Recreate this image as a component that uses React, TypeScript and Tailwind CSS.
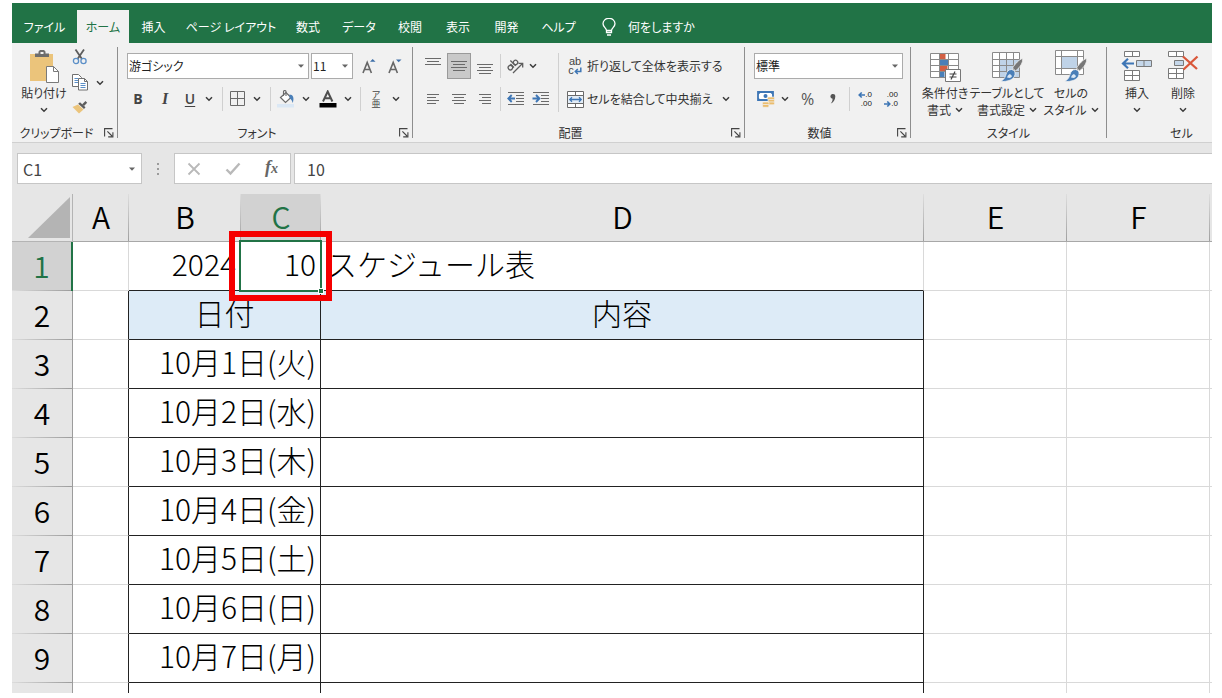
import type { ReactNode } from "react";

/* ---------- small parts ---------- */

function Chevron() {
  return (
    <svg width="8" height="6" viewBox="0 0 8 6" fill="none" stroke="#3b3b3b" strokeWidth="1.5" aria-hidden="true">
      <path d="M1 1.2 4 4.2 7 1.2" />
    </svg>
  );
}

function Triangle({ className = "" }: { className?: string }) {
  return (
    <svg className={className} width="6" height="4" viewBox="0 0 6 4" fill="#666" aria-hidden="true">
      <path d="M0 0.4h6L3 3.8z" />
    </svg>
  );
}

function Tool({ label, width, children, className = "" }: { label: string; width: string; children: ReactNode; className?: string }) {
  return (
    <button type="button" aria-label={label} className={`flex h-[26px] shrink-0 items-center justify-center ${width} ${className}`}>
      {children}
    </button>
  );
}

function Divider({ width, height = "h-6" }: { width: string; height?: string }) {
  return (
    <div className={`flex shrink-0 items-center justify-center ${width}`}>
      <div className={`w-px bg-[#d0d0d0] ${height}`} />
    </div>
  );
}

function Group({ label, width, launcher = true, last = false, children }: { label: string; width: string; launcher?: boolean; last?: boolean; children: ReactNode }) {
  return (
    <section aria-label={label} className={`flex shrink-0 ${width}`}>
      <div className="flex min-w-0 flex-1 flex-col justify-between">
        {children}
        <div className="flex h-[18px] items-center">
          <span className="flex-1 text-center leading-4">{label}</span>
          {launcher && (
            <button type="button" aria-label={`${label}の設定`} className="flex w-4 shrink-0 justify-center">
              <svg width="10" height="10" viewBox="0 0 10 10" fill="none" stroke="#444" strokeWidth="1.1">
                <path d="M0.6 8.5V0.6H8.5M3.4 3.4 8 8M8.9 4.2V8.9H4.2" />
              </svg>
            </button>
          )}
        </div>
      </div>
      {!last && <div className="mb-1 w-px bg-[#8e8e8e]" />}
    </section>
  );
}

function Lines({ rows }: { rows: [number, number, number][] }) {
  return (
    <svg width="16" height="22" viewBox="0 0 16 22" stroke="#6a6a6a" strokeWidth="1" aria-hidden="true">
      {rows.map(([x1, x2, y]) => (
        <path key={y} d={`M${x1} ${y}.5H${x2}`} />
      ))}
    </svg>
  );
}

/* ---------- icons ---------- */

function PasteIcon() {
  return (
    <svg width="32" height="34" viewBox="0 0 32 34" aria-hidden="true">
      <path d="M2 4h23v27H2z" fill="#ebc47b" />
      <path d="M7 7V3.5h3.500V1.500L12 0h4l1.500 1.500v2H21V7z" fill="#6d6d6d" />
      <rect x="12.500" y="2" width="3" height="2" fill="#f1f1f1" />
      <path d="M18.500 16.500h7l5 5v11h-12z" fill="#fff" stroke="#7a7a7a" />
      <path d="M25.500 16.500v5h5" fill="none" stroke="#7a7a7a" />
    </svg>
  );
}

function CutIcon() {
  return (
    <svg width="16" height="16" viewBox="0 0 16 16" fill="none" aria-hidden="true">
      <path d="M3.500 0.500 10 10M12 0.500 5.500 10" stroke="#5d5d5d" strokeWidth="1.800" />
      <circle cx="4" cy="12" r="2.600" stroke="#5b8fc7" strokeWidth="1.300" />
      <circle cx="11.500" cy="12" r="2.600" stroke="#5b8fc7" strokeWidth="1.300" />
    </svg>
  );
}

function CopyIcon() {
  return (
    <svg width="16" height="17" viewBox="0 0 16 17" fill="#fff" stroke="#707070" aria-hidden="true">
      <path d="M0.500 0.500h6l3 3v9h-9z" />
      <path d="M2.500 4.500h4M2.500 6.500h4M2.500 8.500h4" stroke="#5b8fc7" />
      <path d="M6.500 4.500h6l3 3v8.500h-9z" />
      <path d="M12.500 4.500v3h3" fill="none" />
      <path d="M8.500 9.500h5M8.500 11.500h5M8.500 13.500h5" stroke="#5b8fc7" />
    </svg>
  );
}

function BrushIcon() {
  return (
    <svg width="16" height="14" viewBox="0 0 16 14" aria-hidden="true">
      <path d="M0.500 7 6 4.500l5.500 5L7 13.500z" fill="#ebc47b" />
      <path d="M6.200 3.800 8 2.200l5.500 5-1.500 1.800z" fill="#5d5d5d" />
      <path d="m10 4.500 3.500-3.500 1.700 1.700L12 6z" fill="#5d5d5d" />
    </svg>
  );
}

function GrowFont({ down = false }: { down?: boolean }) {
  return (
    <svg width="14" height="17" viewBox="0 0 14 17" aria-hidden="true">
      <path d="M1 15 5.200 4.500 9.400 15M2.600 11.500h5.300" fill="none" stroke="#666" strokeWidth="1.600" />
      <path d={down ? "M8 1.500h5.500L10.700 4.300z" : "M8 3.800h5.500L10.700 1z"} fill="#3e6fa8" />
    </svg>
  );
}

function BordersIcon() {
  return (
    <svg width="16" height="16" viewBox="0 0 16 16" fill="none" stroke="#6a6a6a" aria-hidden="true">
      <path d="M0.500 0.500h14v14h-14zM7.500 0.500v14M0.500 7.500h14" />
    </svg>
  );
}

function BucketIcon() {
  return (
    <svg width="18" height="18" viewBox="0 0 18 18" aria-hidden="true">
      <path d="M0 14h17v3.500H0z" fill="#dbe8f5" />
      <path d="M3.500 7.500 9 2.500l5 5-5.500 5z" fill="#fff" stroke="#6a6a6a" strokeWidth="1.200" />
      <path d="M6.500 6V1.500c0-1.300 2.500-1.300 2.500 0V6" fill="none" stroke="#6a6a6a" strokeWidth="1.100" />
      <path d="M12.500 4.500c3.500 0 5 3 3.300 8.500-.8-2-1.300-3.500-3.300-5z" fill="#4a7fb8" />
    </svg>
  );
}

function FontColorIcon() {
  return (
    <svg width="18" height="18" viewBox="0 0 18 18" aria-hidden="true">
      <path d="M4 11.500 8.700 1.500 13.400 11.500M5.800 8.200h5.800" fill="none" stroke="#4f4f4f" strokeWidth="2" />
      <path d="M0.500 13h17v4.500H0.500z" fill="#000" />
    </svg>
  );
}

function OrientationIcon() {
  return (
    <svg width="18" height="18" viewBox="0 0 18 18" fill="none" stroke="#5d5d5d" strokeWidth="1.300" aria-hidden="true">
      <g transform="rotate(-45 6 8)">
        <circle cx="2.300" cy="8" r="2.200" />
        <path d="M4.900 5.500v5M7.300 3v7.500" />
        <circle cx="9.600" cy="8" r="2.200" />
      </g>
      <path d="M6 16 15.500 6.500M11.500 6.300h4.200v4.200" />
    </svg>
  );
}

function IndentIcon({ right = false }: { right?: boolean }) {
  return (
    <svg width="18" height="16" viewBox="0 0 18 16" fill="none" aria-hidden="true">
      <path d="M1 1.500h16M9 4.500h8M9 7.500h8M9 10.500h8M1 13.500h16" stroke="#6a6a6a" />
      <path d={right ? "M0.500 7.500H7M4 4l3.400 3.500L4 11" : "M8 7.500H1.500M4.700 4 1.300 7.500l3.400 3.500"} stroke="#3e76b5" strokeWidth="1.900" />
    </svg>
  );
}

function WrapIcon() {
  return (
    <span className="flex flex-col font-['Liberation_Sans',sans-serif] text-[11px] leading-[9px] text-[#444]">
      <span>ab</span>
      <span className="flex items-end">
        c
        <svg width="8" height="8" viewBox="0 0 8 8" fill="none" stroke="#3e76b5" strokeWidth="1.500" aria-hidden="true">
          <path d="M6.800 0.500v4H1.500M3.800 2 1.300 4.500 3.800 7" />
        </svg>
      </span>
    </span>
  );
}

function MergeIcon() {
  return (
    <svg width="17" height="17" viewBox="0 0 17 17" fill="none" stroke="#6a6a6a" aria-hidden="true">
      <path d="M0.500 0.500h16v16H0.500zM8.500 0.500v3.500M8.500 13v3.500" fill="#fff" />
      <path d="M0.500 4.500h16v8H0.500z" fill="#e3edf7" />
      <path d="M3 8.500h11M5 6.300 2.800 8.500 5 10.700M12 6.300l2.200 2.200L12 10.700" stroke="#3e76b5" strokeWidth="1.300" />
    </svg>
  );
}

function MoneyIcon() {
  return (
    <svg width="18" height="18" viewBox="0 0 18 18" aria-hidden="true">
      <path d="M1 2h15v8H1z" fill="#fff" stroke="#3e76b5" strokeWidth="1.800" />
      <path d="M1 2h3.500L1 5zM16 2h-3.500L16 5zM1 10V7.500L4 10z" fill="#3e76b5" />
      <circle cx="8.500" cy="6" r="2" fill="#3e76b5" />
      <g fill="#ebbd6e" stroke="#f1f1f1" strokeWidth="0.700">
        <rect x="10.500" y="7" width="7" height="2.800" rx="1.200" />
        <rect x="11" y="9.500" width="6.500" height="2.800" rx="1.200" />
        <rect x="11" y="12" width="6.500" height="2.800" rx="1.200" />
        <rect x="5.500" y="12" width="6.500" height="2.800" rx="1.200" />
        <rect x="5.500" y="14.500" width="6.500" height="2.800" rx="1.200" />
      </g>
    </svg>
  );
}

function DecimalIcon({ decrease = false }: { decrease?: boolean }) {
  const arrow = (
    <svg width="7" height="6" viewBox="0 0 7 6" fill="none" stroke="#3e76b5" strokeWidth="1.600" aria-hidden="true">
      <path d={decrease ? "M0 3h5.500M3.300 0.500 5.800 3 3.300 5.500" : "M7 3H1.500M3.700 0.500 1.200 3l2.500 2.500"} />
    </svg>
  );
  return (
    <span className="flex flex-col items-end font-['Liberation_Sans',sans-serif] text-[8px] leading-[9px] text-[#222]">
      <span className="flex items-center">{!decrease && arrow}{decrease ? ".00" : ".0"}</span>
      <span className="flex items-center">{decrease && arrow}{decrease ? ".0" : ".00"}</span>
    </span>
  );
}

function ConditionalIcon() {
  return (
    <svg width="34" height="34" viewBox="0 0 34 34" aria-hidden="true">
      <path d="M2.500 3.500h28v24h-28z" fill="#fff" />
      <path d="M11.500 3.500h6v6h-6zM11.500 15.500h8v6h-8z" fill="#d35f43" />
      <path d="M11.500 9.500h9v6h-9zM11.500 21.500h5v6h-5z" fill="#4a7fb8" />
      <path d="M2.500 3.500h28v24h-28zM2.500 9.500h28M2.500 15.500h28M2.500 21.500h28M11.500 3.500v24M20.500 3.500v24" fill="none" stroke="#8a8a8a" />
      <path d="M17.500 19.500h15v12h-15z" fill="#fff" stroke="#777" />
      <path d="M21.500 24h7M21.500 27h7M27 21.500l-4 8" stroke="#444" strokeWidth="1.200" />
    </svg>
  );
}

function StyleBrush() {
  return (
    <>
      <path d="M32.500 8.500c1 3.500-2.500 9-7 12.500l-3-3c3-4.500 6.500-8.500 10-9.500z" fill="#777" stroke="#f1f1f1" strokeWidth="0.800" />
      <path d="M21.500 19.500c2.500.5 4 2.500 3.500 5-.7 5-7 7.500-15 7 4-1.500 5-4 6-7 .8-3 2.500-5 5.500-5z" fill="#4a7fb8" stroke="#f1f1f1" strokeWidth="0.800" />
      <path d="M17 27.500c.5-2 1.500-3 3-3.500l2 2c-.5 1-1 1.500-2 2z" fill="#dbe8f5" />
    </>
  );
}

function TableFormatIcon() {
  return (
    <svg width="34" height="34" viewBox="0 0 34 34" aria-hidden="true">
      <path d="M2.500 2.500h27v25h-27z" fill="#fff" />
      <path d="M9.500 9.500h20v18h-20z" fill="#bfd3e8" />
      <path d="M2.500 2.500h27v25h-27zM2.500 9.500h27M2.500 15.500h27M2.500 21.500h27M9.500 2.500v25M16.500 2.500v25M23.500 2.500v25" fill="none" stroke="#8a8a8a" />
      <StyleBrush />
    </svg>
  );
}

function CellStyleIcon() {
  return (
    <svg width="34" height="34" viewBox="0 0 34 34" aria-hidden="true">
      <path d="M1.500 0.500h28v24h-28z" fill="#fff" />
      <path d="M7.500 6.500h16v12h-16z" fill="#bfd3e8" />
      <path d="M1.500 0.500h28v24h-28zM1.500 6.500h28M1.500 18.500h28M7.500 0.500v24M23.500 0.500v24" fill="none" stroke="#8a8a8a" />
      <StyleBrush />
    </svg>
  );
}

function InsertCellsIcon() {
  return (
    <svg width="32" height="32" viewBox="0 0 32 32" fill="#fff" stroke="#7a7a7a" aria-hidden="true">
      <path d="M3.500 1.500h15v5h-15zM11.500 1.500v5M3.500 20.500h15v10h-15zM3.500 25.500h15M11.500 20.500v10" />
      <path d="M15.500 10.500h15v6h-15zM23 10.500v6" fill="#c5d7ea" />
      <path d="M13 13.500H2.500M7 8.800 2 13.500l5 4.700" fill="none" stroke="#3e76b5" strokeWidth="2.200" />
    </svg>
  );
}

function DeleteCellsIcon() {
  return (
    <svg width="32" height="32" viewBox="0 0 32 32" fill="#fff" stroke="#7a7a7a" aria-hidden="true">
      <path d="M1.500 1.500h15v5h-15zM9.500 1.500v5M1.500 18.500h15v10h-15zM1.500 23.500h15M9.500 18.500v10" />
      <path d="M7.500 10.500h9v5h-9z" fill="#c5d7ea" />
      <path d="M16 6.500 30 19M30.500 6.500 16.500 19.500" fill="none" stroke="#d9573a" strokeWidth="2.300" />
    </svg>
  );
}

/* ---------- ribbon ---------- */

const tabs: { label: string; width: string; active?: boolean }[] = [
  { label: "ファイル", width: "w-[65px]" },
  { label: "ホーム", width: "w-[52px]", active: true },
  { label: "挿入", width: "w-[49px]" },
  { label: "ページ レイアウト", width: "w-[106px]" },
  { label: "数式", width: "w-[48px]" },
  { label: "データ", width: "w-[54px]" },
  { label: "校閲", width: "w-[48px]" },
  { label: "表示", width: "w-[48px]" },
  { label: "開発", width: "w-[49px]" },
  { label: "ヘルプ", width: "w-[55px]" },
];

function TabBar() {
  return (
    <nav aria-label="リボン タブ" className="flex shrink-0 items-end bg-[#217346] pt-[7px] text-white">
      {tabs.map((t) => (
        <button
          key={t.label}
          type="button"
          className={`h-[33px] shrink-0 whitespace-nowrap text-center ${t.width} ${t.active ? "bg-[#f1f1f1] text-[#217346]" : ""}`}
        >
          {t.label}
        </button>
      ))}
      <button type="button" className="ml-4 flex h-[33px] items-center gap-3">
        <svg width="14" height="18" viewBox="0 0 14 18" fill="none" stroke="#fff" strokeWidth="1.300" aria-hidden="true">
          <path d="M4.500 12.500c0-2.500-3.500-3.500-3.500-6.800a6 5.400 0 0 1 12 0c0 3.300-3.500 4.300-3.500 6.800zM4.500 12.500v2h5v-2M5 17h4" />
        </svg>
        何をしますか
      </button>
    </nav>
  );
}

function BigButton({ icon, lines, width }: { icon: ReactNode; lines: string[]; width: string }) {
  const single = lines.length === 1;
  return (
    <button type="button" className={`flex shrink-0 flex-col items-center whitespace-nowrap ${width}`}>
      <span className="flex h-[37px] items-start pt-[3px]">{icon}</span>
      <span className="leading-[17px]">{lines[0]}</span>
      <span className="flex h-[17px] items-center gap-1 leading-[17px]">
        {!single && lines[1]}
        <Chevron />
      </span>
    </button>
  );
}

function Picker({ label, value, width }: { label: string; value: string; width: string }) {
  return (
    <label className={`relative flex h-[26px] shrink-0 items-center border border-[#ababab] bg-white ${width}`}>
      <select aria-label={label} defaultValue={value} className="h-full w-full appearance-none bg-transparent px-px text-[#222] outline-none">
        <option>{value}</option>
      </select>
      <Triangle className="pointer-events-none absolute right-1 top-[10px]" />
    </label>
  );
}

function Ribbon() {
  return (
    <div className="flex h-[100px] shrink-0 overflow-hidden border-b border-[#d0d0d0] bg-[#f1f1f1] pt-1 text-[#333]">
      <Group label="クリップボード" width="w-[106px]">
        <div className="flex pl-1">
          <BigButton icon={<PasteIcon />} lines={["貼り付け"]} width="w-[56px]" />
          <div className="flex w-4 flex-col items-center justify-between pb-1 pt-[2px]">
            <button type="button" aria-label="切り取り"><CutIcon /></button>
            <button type="button" aria-label="コピー"><CopyIcon /></button>
            <button type="button" aria-label="書式のコピー"><BrushIcon /></button>
          </div>
          <button type="button" aria-label="コピーのオプション" className="ml-2"><Chevron /></button>
        </div>
      </Group>

      <Group label="フォント" width="w-[295px]">
        <div className="flex flex-col gap-[7px] pt-[6px]">
          <div className="flex gap-[2px] pl-[9px]">
            <Picker label="フォント" value="游ゴシック" width="w-[182px]" />
            <Picker label="フォント サイズ" value="11" width="w-[42px]" />
            <Tool label="フォント サイズの拡大" width="w-[28px]"><GrowFont /></Tool>
            <Tool label="フォント サイズの縮小" width="w-[20px]"><GrowFont down /></Tool>
          </div>
          <div className="flex pl-[6px] font-['Open_Sans',sans-serif] text-[#444]">
            <Tool label="太字" width="w-7"><span className="text-sm font-bold">B</span></Tool>
            <Tool label="斜体" width="w-[26px]"><span className="font-['Liberation_Serif',serif] text-base font-bold italic">I</span></Tool>
            <Tool label="下線" width="w-6"><span className="text-sm font-semibold underline underline-offset-2">U</span></Tool>
            <Tool label="下線の種類" width="w-[14px]"><Chevron /></Tool>
            <Divider width="w-[13px]" />
            <Tool label="罫線" width="w-[18px]"><BordersIcon /></Tool>
            <Tool label="罫線の種類" width="w-5"><Chevron /></Tool>
            <Divider width="w-[7px]" />
            <Tool label="塗りつぶしの色" width="w-6"><BucketIcon /></Tool>
            <Tool label="塗りつぶしの色の選択" width="w-4"><Chevron /></Tool>
            <Tool label="フォントの色" width="w-7"><FontColorIcon /></Tool>
            <Tool label="フォントの色の選択" width="w-3"><Chevron /></Tool>
            <Divider width="w-3" />
            <Tool label="ふりがな" width="w-5">
              <span className="flex flex-col items-center font-['Noto_Sans_CJK_JP',sans-serif] text-[9px] leading-[9px]"><span>ア</span><span>亜</span></span>
            </Tool>
            <Tool label="ふりがなの設定" width="w-5"><Chevron /></Tool>
          </div>
        </div>
      </Group>

      <Group label="配置" width="w-[332px]">
        <div className="flex pl-2 pt-[6px]">
          <div className="flex flex-col gap-[7px]">
            <div className="flex">
              <div className="flex gap-[2px]">
                <Tool label="上揃え" width="w-6"><Lines rows={[[0, 16, 3], [2, 14, 6], [0, 16, 9]]} /></Tool>
                <Tool label="上下中央揃え" width="w-6" className="border border-[#9a9a9a] bg-[#c9c9c9]"><Lines rows={[[0, 16, 6], [2, 14, 9], [0, 16, 12], [2, 14, 15]]} /></Tool>
                <Tool label="下揃え" width="w-6"><Lines rows={[[0, 16, 9], [2, 14, 12], [0, 16, 15], [2, 14, 18]]} /></Tool>
              </div>
              <Divider width="w-[7px]" />
              <Tool label="方向" width="w-6"><OrientationIcon /></Tool>
              <Tool label="方向の選択" width="w-[10px]"><Chevron /></Tool>
            </div>
            <div className="flex">
              <div className="flex gap-[2px]">
                <Tool label="左揃え" width="w-6"><Lines rows={[[2, 14, 6], [2, 11, 9], [2, 14, 12], [2, 11, 15]]} /></Tool>
                <Tool label="中央揃え" width="w-6"><Lines rows={[[1, 15, 6], [3, 13, 9], [1, 15, 12], [3, 13, 15]]} /></Tool>
                <Tool label="右揃え" width="w-6"><Lines rows={[[2, 14, 6], [5, 14, 9], [2, 14, 12], [5, 14, 15]]} /></Tool>
              </div>
              <Divider width="w-[7px]" />
              <Tool label="インデントを減らす" width="w-6"><IndentIcon /></Tool>
              <Tool label="インデントを増やす" width="w-[26px]"><IndentIcon right /></Tool>
            </div>
          </div>
          <Divider width="w-[9px]" height="h-full" />
          <div className="flex flex-col gap-[7px] whitespace-nowrap">
            <button type="button" className="flex h-[26px] items-center">
              <span className="flex w-6 shrink-0 justify-center"><WrapIcon /></span>
              折り返して全体を表示する
            </button>
            <div className="flex">
              <button type="button" className="flex h-[26px] w-[155px] items-center">
                <span className="flex w-6 shrink-0 justify-center"><MergeIcon /></span>
                セルを結合して中央揃え
              </button>
              <Tool label="セル結合のオプション" width="w-4"><Chevron /></Tool>
            </div>
          </div>
        </div>
      </Group>

      <Group label="数値" width="w-[166px]">
        <div className="flex flex-col gap-[7px] pl-[9px] pt-[6px]">
          <Picker label="表示形式" value="標準" width="w-[149px]" />
          <div className="flex">
            <Tool label="通貨表示形式" width="w-6"><MoneyIcon /></Tool>
            <Tool label="通貨の選択" width="w-[14px]"><Chevron /></Tool>
            <Tool label="パーセント スタイル" width="w-[31px]"><span className="font-['Open_Sans',sans-serif] text-base text-[#555]">%</span></Tool>
            <Tool label="桁区切りスタイル" width="w-5">
              <svg width="6" height="10" viewBox="0 0 6 10" fill="#555" aria-hidden="true"><path d="M3 0a2.300 2.300 0 0 1 2.300 2.500C5.300 5.500 3.500 8.500.8 9.500c1-1.200 1.800-2.700 1.800-4.700A2.400 2.400 0 0 1 3 0z" /></svg>
            </Tool>
            <Divider width="w-3" />
            <Tool label="小数点以下の表示桁数を増やす" width="w-5"><DecimalIcon /></Tool>
            <Tool label="小数点以下の表示桁数を減らす" width="w-8"><DecimalIcon decrease /></Tool>
          </div>
        </div>
      </Group>

      <Group label="スタイル" width="w-[196px]" launcher={false}>
        <div className="flex pl-[9px]">
          <BigButton icon={<ConditionalIcon />} lines={["条件付き", "書式"]} width="w-[50px]" />
          <BigButton icon={<TableFormatIcon />} lines={["テーブルとして", "書式設定"]} width="w-[74px]" />
          <BigButton icon={<CellStyleIcon />} lines={["セルの", "スタイル"]} width="w-[54px]" />
        </div>
      </Group>

      <Group label="セル" width="w-[149px]" launcher={false} last>
        <div className="flex pl-[7px]">
          <BigButton icon={<InsertCellsIcon />} lines={["挿入"]} width="w-[46px]" />
          <BigButton icon={<DeleteCellsIcon />} lines={["削除"]} width="w-[46px]" />
        </div>
      </Group>
    </div>
  );
}

/* ---------- formula bar ---------- */

function FormulaBar() {
  return (
    <div className="flex shrink-0 bg-[#e6e6e6] py-[10px] pl-[5px] text-base text-[#444]">
      <div className="flex h-[31px] w-[125px] shrink-0 items-center border border-[#c6c6c6] bg-white pr-[6px]">
        <input aria-label="名前ボックス" defaultValue="C1" className="w-full min-w-0 bg-transparent pl-[5px] outline-none" />
        <button type="button" aria-label="名前の一覧"><Triangle /></button>
      </div>
      <div className="flex w-8 shrink-0 flex-col items-center justify-center gap-[3px]">
        <span className="size-[2px] bg-[#9b9b9b]" />
        <span className="size-[2px] bg-[#9b9b9b]" />
        <span className="size-[2px] bg-[#9b9b9b]" />
      </div>
      <div className="flex h-[31px] w-[117px] shrink-0 items-center justify-around border border-[#c6c6c6] bg-white">
        <button type="button" aria-label="キャンセル">
          <svg width="14" height="14" viewBox="0 0 14 14" stroke="#b9b9b9" strokeWidth="1.800"><path d="M1.500 1.500l11 11M12.500 1.500l-11 11" /></svg>
        </button>
        <button type="button" aria-label="入力">
          <svg width="16" height="14" viewBox="0 0 16 14" fill="none" stroke="#b9b9b9" strokeWidth="2.400"><path d="M1.500 7.500 5.500 11.500 14.500 1.500" /></svg>
        </button>
        <button type="button" aria-label="関数の挿入" className="font-['Liberation_Serif',serif] text-lg font-bold italic leading-none text-[#666]">
          f<span className="text-sm">x</span>
        </button>
      </div>
      <input aria-label="数式バー" defaultValue="10" className="ml-[3px] h-[31px] min-w-0 flex-1 border border-r-0 border-[#c6c6c6] bg-white pl-3 outline-none" />
    </div>
  );
}

/* ---------- sheet ---------- */

const days = ["火", "水", "木", "金", "土", "日", "月", "火"];
const columns = ["A", "B", "C", "D", "E", "F"];

const grid = "border-b border-r border-[#d9d9d9]";
const ruled = "border-b border-r border-[#222]";

function RowHead({ n, active = false }: { n: number; active?: boolean }) {
  return (
    <th
      scope="row"
      className={`h-[49px] bg-[linear-gradient(to_right,#dcdcdc,#9c9c9c)] bg-[length:100%_1px] bg-bottom bg-no-repeat p-0 pb-1 text-center font-[350] ${
        active ? "border-r-2 border-[#217346] bg-[#d2d2d2] text-[#217346]" : "border-r border-[#9c9c9c] bg-[#e6e6e6]"
      }`}
    >
      {n}
    </th>
  );
}

function Sheet() {
  return (
    <div className="min-h-0 flex-1 overflow-hidden">
      <table className="w-full table-fixed border-separate border-spacing-0 text-[30px] font-light leading-none text-black">
        <colgroup>
          <col className="w-[61px]" />
          <col className="w-[56px]" />
          <col className="w-[112px]" />
          <col className="w-[80px]" />
          <col className="w-[603px]" />
          <col className="w-[143px]" />
          <col className="w-[143px]" />
          <col />
        </colgroup>
        <thead>
          <tr className="bg-[#e6e6e6]">
            <th className="h-12 border-b border-r border-[#b4b4b4] p-0" aria-label="すべて選択">
              <svg className="ml-auto mr-[2px]" width="42" height="41" viewBox="0 0 42 41" fill="#b4b4b4" aria-hidden="true"><path d="M42 0v41H0z" /></svg>
            </th>
            {columns.map((c) => (
              <th
                key={c}
                scope="col"
                className={`h-12 border-b border-[#a8a8a8] bg-[linear-gradient(to_bottom,#dedede,#a0a0a0)] bg-[length:1px_100%] bg-right bg-no-repeat p-0 pb-1 font-[350] ${
                  c === "C" ? "bg-[#d2d2d2] text-[#217346]" : ""
                }`}
              >
                {c}
              </th>
            ))}
            <th className="h-12 border-b border-[#a8a8a8] p-0" />
          </tr>
        </thead>
        <tbody>
          <tr>
            <RowHead n={1} active />
            <td className={`p-0 ${grid}`} />
            <td className="border-b border-[#222] p-0 pb-[6px] pr-[5px] text-right">2024</td>
            <td className="relative border-b border-r border-[#222] p-0 pb-[6px] pr-1 text-right">
              10
              <span className="absolute -inset-[2px] border-2 border-[#217346]" />
              <span className="absolute -inset-x-3 -inset-y-[11px] z-10 border-[6px] border-[#f50000]" />
              <span className="absolute -bottom-1 -right-1 size-[6px] border border-white bg-[#217346]" />
            </td>
            <td className="border-b border-r border-b-[#222] border-r-[#d9d9d9] p-0 pb-[6px] pl-[6px] text-left">スケジュール表</td>
            <td className={`p-0 ${grid}`} />
            <td className={`p-0 ${grid}`} />
            <td className="border-b border-[#d9d9d9] p-0" />
          </tr>
          <tr>
            <RowHead n={2} />
            <td className="border-b border-r border-b-[#d9d9d9] border-r-[#222] p-0" />
            <td colSpan={2} className={`bg-[#ddebf7] p-0 pb-[6px] text-center ${ruled}`}>日付</td>
            <td className={`bg-[#ddebf7] p-0 pb-[6px] text-center ${ruled}`}>内容</td>
            <td className={`p-0 ${grid}`} />
            <td className={`p-0 ${grid}`} />
            <td className="border-b border-[#d9d9d9] p-0" />
          </tr>
          {days.map((d, i) => (
            <tr key={i}>
              <RowHead n={i + 3} />
              <td className="border-b border-r border-b-[#d9d9d9] border-r-[#222] p-0" />
              <td colSpan={2} className={`whitespace-nowrap p-0 pb-[6px] pr-1 text-right ${ruled}`}>{`10月${i + 1}日(${d})`}</td>
              <td className={`p-0 ${ruled}`} />
              <td className={`p-0 ${grid}`} />
              <td className={`p-0 ${grid}`} />
              <td className="border-b border-[#d9d9d9] p-0" />
            </tr>
          ))}
        </tbody>
      </table>
    </div>
  );
}

export default function App() {
  return (
    <div className="h-screen bg-white pb-[5px] pl-3 pr-[10px] pt-[3px] font-['Noto_Sans_CJK_JP',sans-serif]">
      <main className="flex h-full flex-col overflow-hidden">
        <div className="flex shrink-0 flex-col text-xs [font-feature-settings:'palt']">
          <TabBar />
          <Ribbon />
        </div>
        <FormulaBar />
        <Sheet />
      </main>
    </div>
  );
}
